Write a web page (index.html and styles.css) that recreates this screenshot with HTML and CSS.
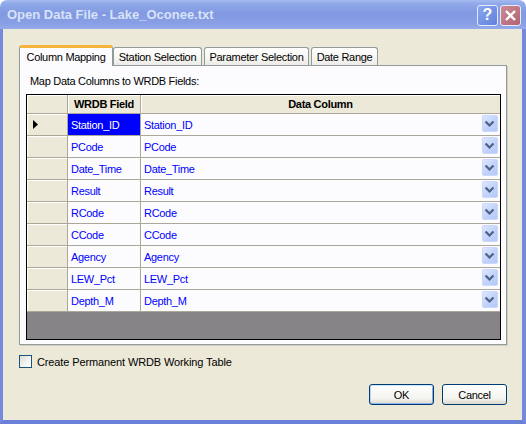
FILE: index.html
```html
<!DOCTYPE html>
<html>
<head>
<meta charset="utf-8">
<title>Open Data File</title>
<link rel="stylesheet" href="styles.css">
</head>
<body>
<div class="window">
  <div class="titlebar">
    <span class="title">Open Data File - Lake_Oconee.txt</span>
    <div class="tbtns">
      <span class="tbtn help">?</span>
      <span class="tbtn close"><svg width="13" height="13" viewBox="0 0 13 13"><path d="M2 2 L11 11 M11 2 L2 11" stroke="#fff" stroke-width="2.4" fill="none"/></svg></span>
    </div>
  </div>
  <div class="body">
    <div class="tabs">
      <div class="tab active w1">Column Mapping</div>
      <div class="tab w2">Station Selection</div>
      <div class="tab w3">Parameter Selection</div>
      <div class="tab w4">Date Range</div>
    </div>
    <div class="panel">
      <div class="label">Map Data Columns to WRDB Fields:</div>
      <div class="grid">
        <div class="hcell corner"></div>
        <div class="hcell">WRDB Field</div>
        <div class="hcell last">Data Column</div>

        <div class="rhead"><svg width="5" height="9" viewBox="0 0 5 9"><polygon points="0,0 5,4.5 0,9" fill="#000"/></svg></div>
        <div class="cell sel">Station_ID</div>
        <div class="cell dcell"><span>Station_ID</span><span class="dd"><svg width="14" height="15" viewBox="0 0 14 15"><polyline points="2.5,5.5 6.5,9.5 10.5,5.5" fill="none" stroke="#4D6185" stroke-width="2.2"/></svg></span></div>

        <div class="rhead"></div>
        <div class="cell">PCode</div>
        <div class="cell dcell"><span>PCode</span><span class="dd"><svg width="14" height="15" viewBox="0 0 14 15"><polyline points="2.5,5.5 6.5,9.5 10.5,5.5" fill="none" stroke="#4D6185" stroke-width="2.2"/></svg></span></div>

        <div class="rhead"></div>
        <div class="cell">Date_Time</div>
        <div class="cell dcell"><span>Date_Time</span><span class="dd"><svg width="14" height="15" viewBox="0 0 14 15"><polyline points="2.5,5.5 6.5,9.5 10.5,5.5" fill="none" stroke="#4D6185" stroke-width="2.2"/></svg></span></div>

        <div class="rhead"></div>
        <div class="cell">Result</div>
        <div class="cell dcell"><span>Result</span><span class="dd"><svg width="14" height="15" viewBox="0 0 14 15"><polyline points="2.5,5.5 6.5,9.5 10.5,5.5" fill="none" stroke="#4D6185" stroke-width="2.2"/></svg></span></div>

        <div class="rhead"></div>
        <div class="cell">RCode</div>
        <div class="cell dcell"><span>RCode</span><span class="dd"><svg width="14" height="15" viewBox="0 0 14 15"><polyline points="2.5,5.5 6.5,9.5 10.5,5.5" fill="none" stroke="#4D6185" stroke-width="2.2"/></svg></span></div>

        <div class="rhead"></div>
        <div class="cell">CCode</div>
        <div class="cell dcell"><span>CCode</span><span class="dd"><svg width="14" height="15" viewBox="0 0 14 15"><polyline points="2.5,5.5 6.5,9.5 10.5,5.5" fill="none" stroke="#4D6185" stroke-width="2.2"/></svg></span></div>

        <div class="rhead"></div>
        <div class="cell">Agency</div>
        <div class="cell dcell"><span>Agency</span><span class="dd"><svg width="14" height="15" viewBox="0 0 14 15"><polyline points="2.5,5.5 6.5,9.5 10.5,5.5" fill="none" stroke="#4D6185" stroke-width="2.2"/></svg></span></div>

        <div class="rhead"></div>
        <div class="cell">LEW_Pct</div>
        <div class="cell dcell"><span>LEW_Pct</span><span class="dd"><svg width="14" height="15" viewBox="0 0 14 15"><polyline points="2.5,5.5 6.5,9.5 10.5,5.5" fill="none" stroke="#4D6185" stroke-width="2.2"/></svg></span></div>

        <div class="rhead"></div>
        <div class="cell">Depth_M</div>
        <div class="cell dcell"><span>Depth_M</span><span class="dd"><svg width="14" height="15" viewBox="0 0 14 15"><polyline points="2.5,5.5 6.5,9.5 10.5,5.5" fill="none" stroke="#4D6185" stroke-width="2.2"/></svg></span></div>
      </div>
    </div>
    <label class="check"><span class="box"></span><span class="checktext">Create Permanent WRDB Working Table</span></label>
    <div class="buttons">
      <button class="btn default">OK</button>
      <button class="btn">Cancel</button>
    </div>
  </div>
</div>
</body>
</html>
```

FILE: styles.css
```css
* { box-sizing: border-box; }
html, body { margin: 0; padding: 0; }
body {
  width: 526px;
  height: 424px;
  overflow: hidden;
  background: #ffffff;
  font-family: "Liberation Sans", Arial, sans-serif;
  font-size: 11px;
  letter-spacing: -0.3px;
  color: #000;
}
.window {
  width: 526px;
  height: 424px;
  display: flex;
  flex-direction: column;
  border-radius: 7px 7px 0 0;
  overflow: hidden;
}
.titlebar {
  height: 29px;
  flex: none;
  display: flex;
  align-items: center;
  padding: 0 5px 0 7px;
  background: linear-gradient(to bottom, #A6BAF0 0%, #91AAE9 12%, #8199E2 45%, #889FE5 80%, #94AAEA 100%);
}
.title {
  flex: 1;
  font-size: 13px;
  font-weight: bold;
  letter-spacing: 0;
  color: #D8E2F8;
}
.tbtns {
  display: flex;
  gap: 2px;
  margin-top: 1px;
}
.tbtn {
  width: 21px;
  height: 21px;
  border: 1px solid #E4EBFB;
  border-radius: 3px;
  display: flex;
  align-items: center;
  justify-content: center;
}
.help {
  background: linear-gradient(135deg, #8BA6EE, #5F82DE);
  color: #fff;
  font-weight: bold;
  font-size: 16px;
  letter-spacing: 0;
  line-height: 1;
}
.close {
  background: linear-gradient(135deg, #CE8A95, #B26473);
}
.body {
  flex: 1;
  display: flex;
  flex-direction: column;
  background: #ECE9D8;
  border-left: 3px solid #7589DC;
  border-right: 4px solid #7589DC;
  border-bottom: 4px solid #6A7FD8;
  padding: 16px 15px 0 16px;
}
.tabs {
  display: flex;
  align-items: flex-end;
  height: 20px;
  position: relative;
  z-index: 1;
}
.tab {
  height: 18px;
  border: 1px solid #919B9C;
  border-bottom: none;
  border-radius: 3px 3px 0 0;
  background: linear-gradient(to bottom, #FFFFFF 0%, #F7F7F4 50%, #ECEBE6 100%);
  display: flex;
  align-items: center;
  justify-content: center;
  padding-top: 1px;
}
.tab.active {
  height: 21px;
  margin-bottom: -1px;
  background: #FCFCFE;
  border-top: 3px solid #F5B43C;
  padding-top: 0;
}
.w1 { width: 94px; }
.w2 { width: 89px; }
.w3 { width: 105px; margin-left: 2px; }
.w4 { width: 67px; margin-left: 2px; }
.panel {
  flex: none;
  height: 280px;
  background: #FCFCFE;
  border: 1px solid #919B9C;
  box-shadow: 1px 1px 0 #D0CEBF;
  padding: 9px 5px 4px 6px;
}
.label {
  line-height: 13px;
  margin: 0 0 6px 4px;
}
.grid {
  display: grid;
  grid-template-columns: 41px 73px 359px;
  grid-template-rows: 19px repeat(9, 22px) 1fr;
  width: 475px;
  height: 246px;
  border: 1px solid #000;
  background: #868486;
}
.hcell {
  background: #ECE9D8;
  border-right: 1px solid #ACA899;
  border-bottom: 1px solid #ACA899;
  box-shadow: inset 1px 1px 0 #FFFFFF;
  font-weight: bold;
  display: flex;
  align-items: center;
  justify-content: center;
}
.hcell.last { border-right: none; }
.rhead {
  background: #ECE9D8;
  border-right: 1px solid #ACA899;
  border-bottom: 1px solid #ACA899;
  box-shadow: inset 1px 1px 0 #FFFFFF;
  display: flex;
  align-items: center;
  padding-left: 6px;
}
.cell {
  background: #FCFCFE;
  border-right: 1px solid #ACA899;
  border-bottom: 1px solid #ACA899;
  color: #0000FF;
  display: flex;
  align-items: center;
  padding-left: 3px;
}
.cell.sel {
  background: #0000FF;
  color: #FFFFFF;
}
.dcell {
  border-right: none;
  justify-content: space-between;
  padding-right: 2px;
}
.dd {
  width: 16px;
  height: 17px;
  margin-top: -2px;
  border: 1px solid #C9D8FC;
  border-radius: 2px;
  background: linear-gradient(135deg, #DDE8FE 0%, #C3D4FB 50%, #B4C9F8 100%);
  display: flex;
  align-items: center;
  justify-content: center;
}
.check {
  display: flex;
  align-items: center;
  gap: 5px;
  margin-top: 10px;
  height: 13px;
}
.checktext {
  letter-spacing: -0.12px;
}
.box {
  width: 13px;
  height: 13px;
  border: 1px solid #1C5180;
  background: linear-gradient(135deg, #DCDCD7 0%, #F4F4F0 60%, #FFFFFF 100%);
}
.buttons {
  display: flex;
  justify-content: flex-end;
  gap: 8px;
  margin-top: 16px;
}
.btn {
  width: 65px;
  height: 21px;
  border: 1px solid #003C74;
  border-radius: 3px;
  background: linear-gradient(to bottom, #FFFFFF 0%, #F4F4F0 70%, #DCD8CC 100%);
  font-family: "Liberation Sans", Arial, sans-serif;
  font-size: 11px;
  letter-spacing: -0.3px;
  color: #000;
  padding: 0;
}
.btn.default {
  box-shadow: inset 0 1px 0 #CEE7FF, inset 0 -1px 0 #8EB1F0, inset 1px 0 0 #BCD4F6, inset -1px 0 0 #89ADE4;
}
```
